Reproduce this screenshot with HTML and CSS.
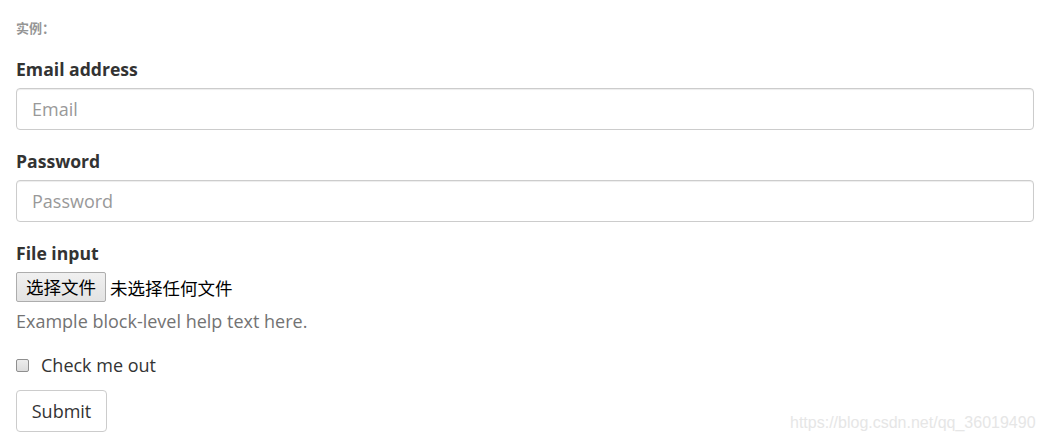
FILE: index.html
```html
<!DOCTYPE html>
<html>
<head>
<meta charset="utf-8">
<link rel="stylesheet" href="styles.css">
</head>
<body>
<div class="page">
  <div class="caption">实例：</div>
  <form class="form">
    <div class="group">
      <label class="label">Email address</label>
      <input class="control" type="email" placeholder="Email">
    </div>
    <div class="group">
      <label class="label">Password</label>
      <input class="control" type="password" placeholder="Password">
    </div>
    <div class="group">
      <label class="label">File input</label>
      <div class="file">
        <span class="file-btn">选择文件</span>
        <span class="file-name">未选择任何文件</span>
      </div>
      <p class="help">Example block-level help text here.</p>
    </div>
    <div class="check">
      <span class="box"></span>
      <span class="check-text">Check me out</span>
    </div>
    <button class="submit" type="button">Submit</button>
  </form>
  <div class="watermark">https://blog.csdn.net/qq_36019490</div>
</div>
</body>
</html>
```

FILE: styles.css
```css
html, body {
  margin: 0;
  padding: 0;
  background: #fff;
}
.page {
  position: relative;
  width: 1043px;
  height: 442px;
  padding: 0 9px 0 16px;
  box-sizing: border-box;
  font-family: "Open Sans", "Noto Sans CJK SC", sans-serif;
  color: #333;
  overflow: hidden;
}
.caption {
  padding-top: 19px;
  font-size: 13px;
  line-height: 18px;
  font-weight: bold;
  color: #959595;
  font-family: "Noto Sans CJK SC", sans-serif;
}
.form {
  margin-top: 19px;
}
.group {
  margin-bottom: 18px;
}
.label {
  display: block;
  font-size: 17.6px;
  font-weight: bold;
  line-height: 26px;
  margin-bottom: 6px;
  color: #333;
}
.control {
  display: block;
  box-sizing: border-box;
  width: 1018px;
  height: 42px;
  padding: 0 15px;
  font-family: "Open Sans", sans-serif;
  font-size: 18px;
  border: 1px solid #ccc;
  border-radius: 4px;
  box-shadow: inset 0 1px 1px rgba(0,0,0,.075);
  color: #555;
  outline: none;
}
.control::placeholder {
  color: #999;
}
.file {
  display: flex;
  align-items: center;
  height: 30px;
  margin-top: 2px;
}
.file-btn {
  box-sizing: border-box;
  width: 90px;
  height: 30px;
  border: 1px solid #adadad;
  border-radius: 2px;
  background: linear-gradient(#f0f0f0, #e3e3e3);
  font-family: "Noto Sans CJK SC", sans-serif;
  font-size: 17.5px;
  line-height: 28px;
  text-align: center;
  color: #000;
}
.file-name {
  margin-left: 4px;
  font-family: "Noto Sans CJK SC", sans-serif;
  font-size: 17.5px;
  color: #000;
}
.help {
  margin: 6px 0 0;
  font-size: 18px;
  line-height: 26px;
  color: #737373;
}
.check {
  display: flex;
  align-items: center;
  height: 26px;
  margin-top: 1px;
}
.box {
  box-sizing: border-box;
  width: 13px;
  height: 13px;
  border: 1px solid #8f8f8f;
  border-radius: 2px;
  background: linear-gradient(#ececec, #dcdcdc);
}
.check-text {
  margin-left: 12px;
  font-size: 18px;
  color: #333;
}
.submit {
  display: block;
  margin-top: 12px;
  box-sizing: border-box;
  width: 91px;
  height: 42px;
  padding: 0;
  font-family: "Open Sans", sans-serif;
  font-size: 18px;
  color: #333;
  background: #fff;
  border: 1px solid #ccc;
  border-radius: 4px;
}
.watermark {
  position: absolute;
  left: 790px;
  top: 414px;
  font-family: "Liberation Sans", Arial, sans-serif;
  font-size: 16px;
  color: #e6e6e6;
}
```
